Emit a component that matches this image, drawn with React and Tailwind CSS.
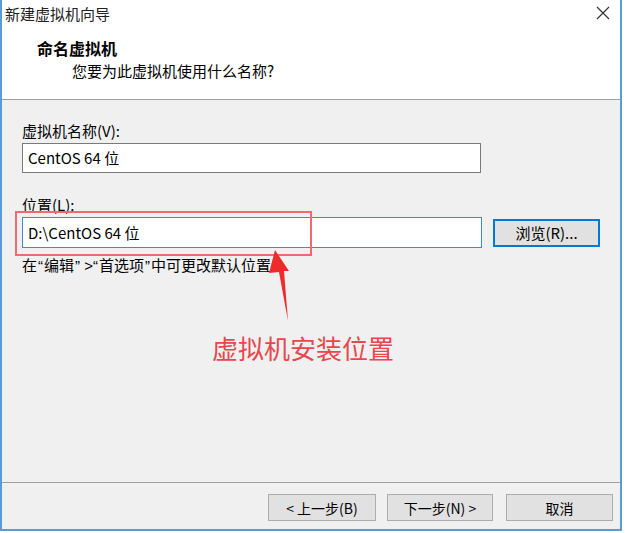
export default function App() {
  const font = { fontFamily: '"Noto Sans CJK SC", "Noto Sans", sans-serif' };
  const q = "font-['Liberation_Sans',sans-serif] px-[1px]";
  return (
    <div className="relative w-[625px] h-[533px] bg-white overflow-hidden" style={font}>
      <div className="flex flex-col w-[622px] h-[531px] border-l-2 border-r-2 border-b-2 border-[#5b9bd5] bg-[#f0f0f0] text-[15px] text-black">
        {/* header */}
        <div className="h-[100px] bg-white border-b border-[#a0a0a0] flex flex-col">
          <div className="h-[27px] flex items-center justify-between pl-[3px] pr-[10px]">
            <span className="leading-[20px] text-[15px] text-[#222]">新建虚拟机向导</span>
            <svg width="14" height="14" viewBox="0 0 14 14" className="mt-[-1px]">
              <path d="M1 1 L13 13 M13 1 L1 13" stroke="#333" strokeWidth="1.2" fill="none" />
            </svg>
          </div>
          <div className="pl-[35px] mt-[10px] leading-[22px] text-[16px] font-bold">命名虚拟机</div>
          <div className="pl-[70px] mt-[1px] leading-[22px] text-[15px]">您要为此虚拟机使用什么名称?</div>
        </div>
        {/* body */}
        <div className="flex-1 pl-[20px] pt-[21px] flex flex-col">
          <div className="leading-[20px]">虚拟机名称(V):</div>
          <div className="mt-[2px] w-[459px] h-[30px] bg-white border border-[#7a7a7a] flex items-center pl-[5px] leading-[20px]">
            CentOS 64 位
          </div>
          <div className="mt-[22px] leading-[20px]">位置(L):</div>
          <div className="mt-[2px] flex items-center">
            <div className="w-[460px] h-[31px] bg-white border border-[#3c8ad8] flex items-center pl-[5px] leading-[20px]">
              D:\CentOS 64 位
            </div>
            <div className="ml-[11px] w-[107px] h-[28px] bg-[#e1e1e1] border-2 border-[#0078d7] flex items-center justify-center text-[15px] leading-[20px]">
              浏览(R)...
            </div>
          </div>
          <div className="mt-[7px] leading-[20px]">
            在<span className={q}>“</span>编辑<span className={q}>” &gt;“</span>首选项<span className={q}>”</span>中可更改默认位置
          </div>
        </div>
        {/* footer */}
        <div className="h-[47px] border-t border-[#a0a0a0] flex items-start justify-end pr-[7px] pt-[11px]">
          <div className="w-[108px] h-[27px] bg-[#e1e1e1] border border-[#adadad] flex items-center justify-center text-[14px] leading-[20px]">
            &lt; 上一步(B)
          </div>
          <div className="ml-[11px] w-[106px] h-[27px] bg-[#e1e1e1] border border-[#adadad] flex items-center justify-center text-[14px] leading-[20px]">
            下一步(N) &gt;
          </div>
          <div className="ml-[13px] w-[107px] h-[27px] bg-[#e1e1e1] border border-[#adadad] flex items-center justify-center text-[14px] leading-[20px]">
            取消
          </div>
        </div>
      </div>

      {/* annotations */}
      <div className="absolute left-[15px] top-[211px] w-[297px] h-[45px] border-2 border-[#ef6b70]" />
      <svg className="absolute left-0 top-0" width="625" height="533" viewBox="0 0 625 533">
        <polygon points="275,250 289,271 284,271 288,321 279,272 269,273" fill="#ee2a2a" />
      </svg>
      <div className="absolute left-[212px] top-[331px] text-[26px] leading-[34px] text-[#e5484d]">
        虚拟机安装位置
      </div>
    </div>
  );
}
